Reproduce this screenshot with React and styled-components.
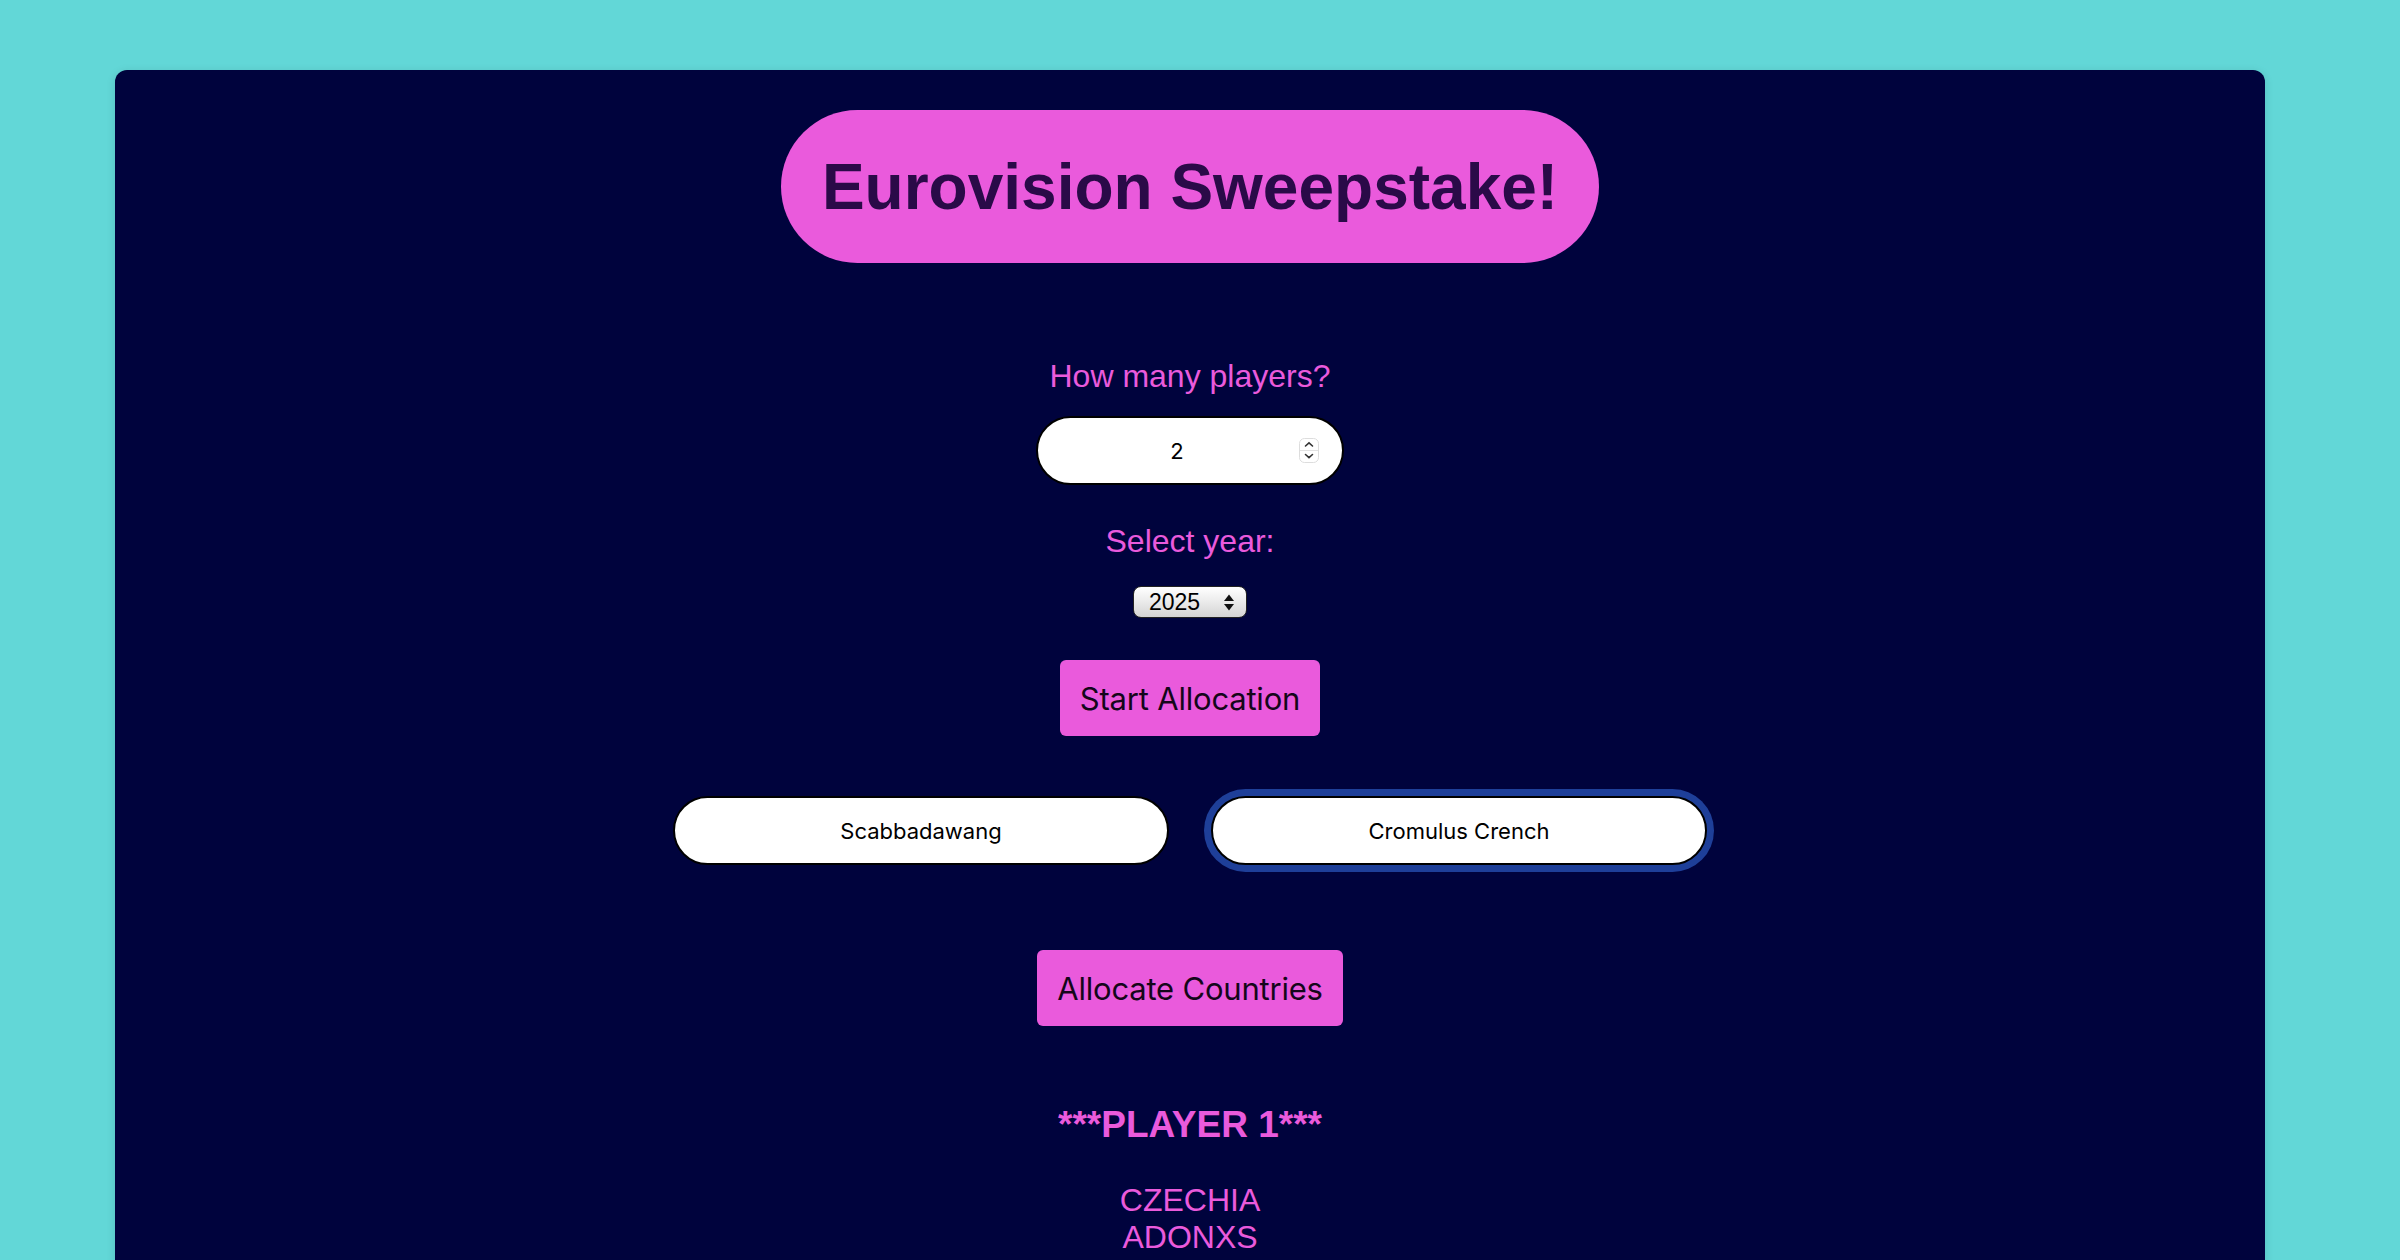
import React, { useState } from 'react'
import styled, { createGlobalStyle } from 'styled-components'

const pink = '#ea5adc'
const navy = '#00033d'
const labelFont = '"Liberation Sans", Arial, Helvetica, sans-serif'
const uiFont = 'Inter, "Open Sans", sans-serif'

const GlobalStyle = createGlobalStyle`
  html, body {
    margin: 0;
    padding: 0;
    background: #62d7d7;
  }
  body {
    font-family: ${labelFont};
  }
`

const Page = styled.div`
  padding: 70px 135px 0 115px;
  min-height: 1260px;
  box-sizing: border-box;
  overflow: hidden;
`

const Card = styled.main`
  background: ${navy};
  border-radius: 12px 12px 0 0;
  box-shadow: 0 2px 10px rgba(0, 0, 0, 0.12);
  min-height: 1200px;
  padding-top: 40px;
  display: flex;
  flex-direction: column;
  align-items: center;
`

const Title = styled.h1`
  margin: 0;
  background: ${pink};
  color: #2a0a48;
  font-family: ${labelFont};
  font-weight: 700;
  font-size: 64px;
  line-height: 74px;
  padding: 40px 41px 39px;
  border-radius: 77px;
`

const Label = styled.label`
  display: block;
  color: ${pink};
  font-family: ${labelFont};
  font-size: 32px;
  line-height: 37px;
  margin-top: ${(p) => p.$top}px;
`

const Field = styled.div`
  position: relative;
  margin-top: ${(p) => p.$top}px;
`

const NumberInput = styled.input`
  box-sizing: border-box;
  width: 308px;
  height: 69px;
  border: 2px solid #000;
  border-radius: 35px;
  background: #fff;
  text-align: center;
  font-family: ${uiFont};
  font-size: 22px;
  padding: 0 26px 0 0;
  color: #000;
  outline: none;
  -moz-appearance: textfield;
  &::-webkit-inner-spin-button,
  &::-webkit-outer-spin-button {
    -webkit-appearance: none;
    margin: 0;
  }
`

const Spinner = styled.svg`
  position: absolute;
  right: 25px;
  top: 22px;
  pointer-events: none;
`

const Select = styled.select`
  box-sizing: border-box;
  width: 114px;
  height: 32px;
  appearance: none;
  -webkit-appearance: none;
  border: 1px solid #222;
  border-radius: 8px;
  background: linear-gradient(#ffffff, #e6e6e6 60%, #d4d4d4);
  font-family: ${labelFont};
  font-size: 23px;
  color: #000;
  padding: 0 0 0 15px;
  outline: none;
`

const SelectArrows = styled.svg`
  position: absolute;
  right: 12px;
  top: 8px;
  pointer-events: none;
`

const Button = styled.button`
  margin-top: ${(p) => p.$top}px;
  background: ${pink};
  color: #14061a;
  border: none;
  border-radius: 6px;
  height: 76px;
  padding: 0 20px;
  font-family: ${uiFont};
  font-size: 31px;
  letter-spacing: -0.2px;
  cursor: pointer;
`

const NameRow = styled.div`
  display: flex;
  gap: 42px;
  margin-top: 60px;
`

const NameInput = styled.input`
  box-sizing: border-box;
  width: 496px;
  height: 69px;
  border: 2px solid #000;
  border-radius: 35px;
  background: #fff;
  text-align: center;
  font-family: ${uiFont};
  font-size: 22px;
  color: #000;
  outline: none;
  box-shadow: ${(p) => (p.$focused ? '0 0 0 7px #1e3f99' : 'none')};
  caret-color: #2f6fe8;
`

const PlayerTitle = styled.h2`
  margin: 77px 0 0;
  color: ${pink};
  font-family: ${labelFont};
  font-weight: 700;
  font-size: 37px;
  line-height: 43px;
`

const CountryList = styled.ul`
  list-style: none;
  margin: 36px 0 0;
  padding: 0;
  text-align: center;
  li {
    color: ${pink};
    font-family: ${labelFont};
    font-size: 32px;
    line-height: 37px;
  }
`

const players = [
  { name: 'Player 1', countries: ['CZECHIA', 'ADONXS'] },
]

export default function App() {
  const [count, setCount] = useState(2)
  const [year, setYear] = useState('2025')
  const [names, setNames] = useState(['Scabbadawang', 'Cromulus Crench'])

  return (
    <>
      <GlobalStyle />
      <Page>
        <Card>
          <Title>Eurovision Sweepstake!</Title>

          <Label $top={95} htmlFor="count">How many players?</Label>
          <Field $top={21}>
            <NumberInput
              id="count"
              type="number"
              value={count}
              onChange={(e) => setCount(e.target.value)}
            />
            <Spinner width="20" height="25" viewBox="0 0 20 25">
              <rect x="0.5" y="0.5" width="19" height="24" rx="5" fill="#fff" stroke="#ddd" />
              <line x1="1" y1="12.5" x2="19" y2="12.5" stroke="#e2e2e2" />
              <path d="M6.5 8 L10 4.8 L13.5 8" fill="none" stroke="#333" strokeWidth="1.6" strokeLinecap="round" />
              <path d="M6.5 16.5 L10 19.7 L13.5 16.5" fill="none" stroke="#333" strokeWidth="1.6" strokeLinecap="round" />
            </Spinner>
          </Field>

          <Label $top={38} htmlFor="year">Select year:</Label>
          <Field $top={26}>
            <Select id="year" value={year} onChange={(e) => setYear(e.target.value)}>
              <option>2025</option>
              <option>2024</option>
              <option>2023</option>
            </Select>
            <SelectArrows width="12" height="17" viewBox="0 0 12 17">
              <path d="M6 0.5 L11 7 H1 Z" fill="#111" />
              <path d="M6 16.5 L11 10 H1 Z" fill="#111" />
            </SelectArrows>
          </Field>

          <Button $top={42}>Start Allocation</Button>

          <NameRow>
            {names.map((n, i) => (
              <NameInput
                key={i}
                value={n}
                $focused={i === names.length - 1}
                onChange={(e) => {
                  const next = [...names]
                  next[i] = e.target.value
                  setNames(next)
                }}
              />
            ))}
          </NameRow>

          <Button $top={85}>Allocate Countries</Button>

          {players.map((p) => (
            <React.Fragment key={p.name}>
              <PlayerTitle>***{p.name.toUpperCase()}***</PlayerTitle>
              <CountryList>
                {p.countries.map((c) => (
                  <li key={c}>{c}</li>
                ))}
              </CountryList>
            </React.Fragment>
          ))}
        </Card>
      </Page>
    </>
  )
}
